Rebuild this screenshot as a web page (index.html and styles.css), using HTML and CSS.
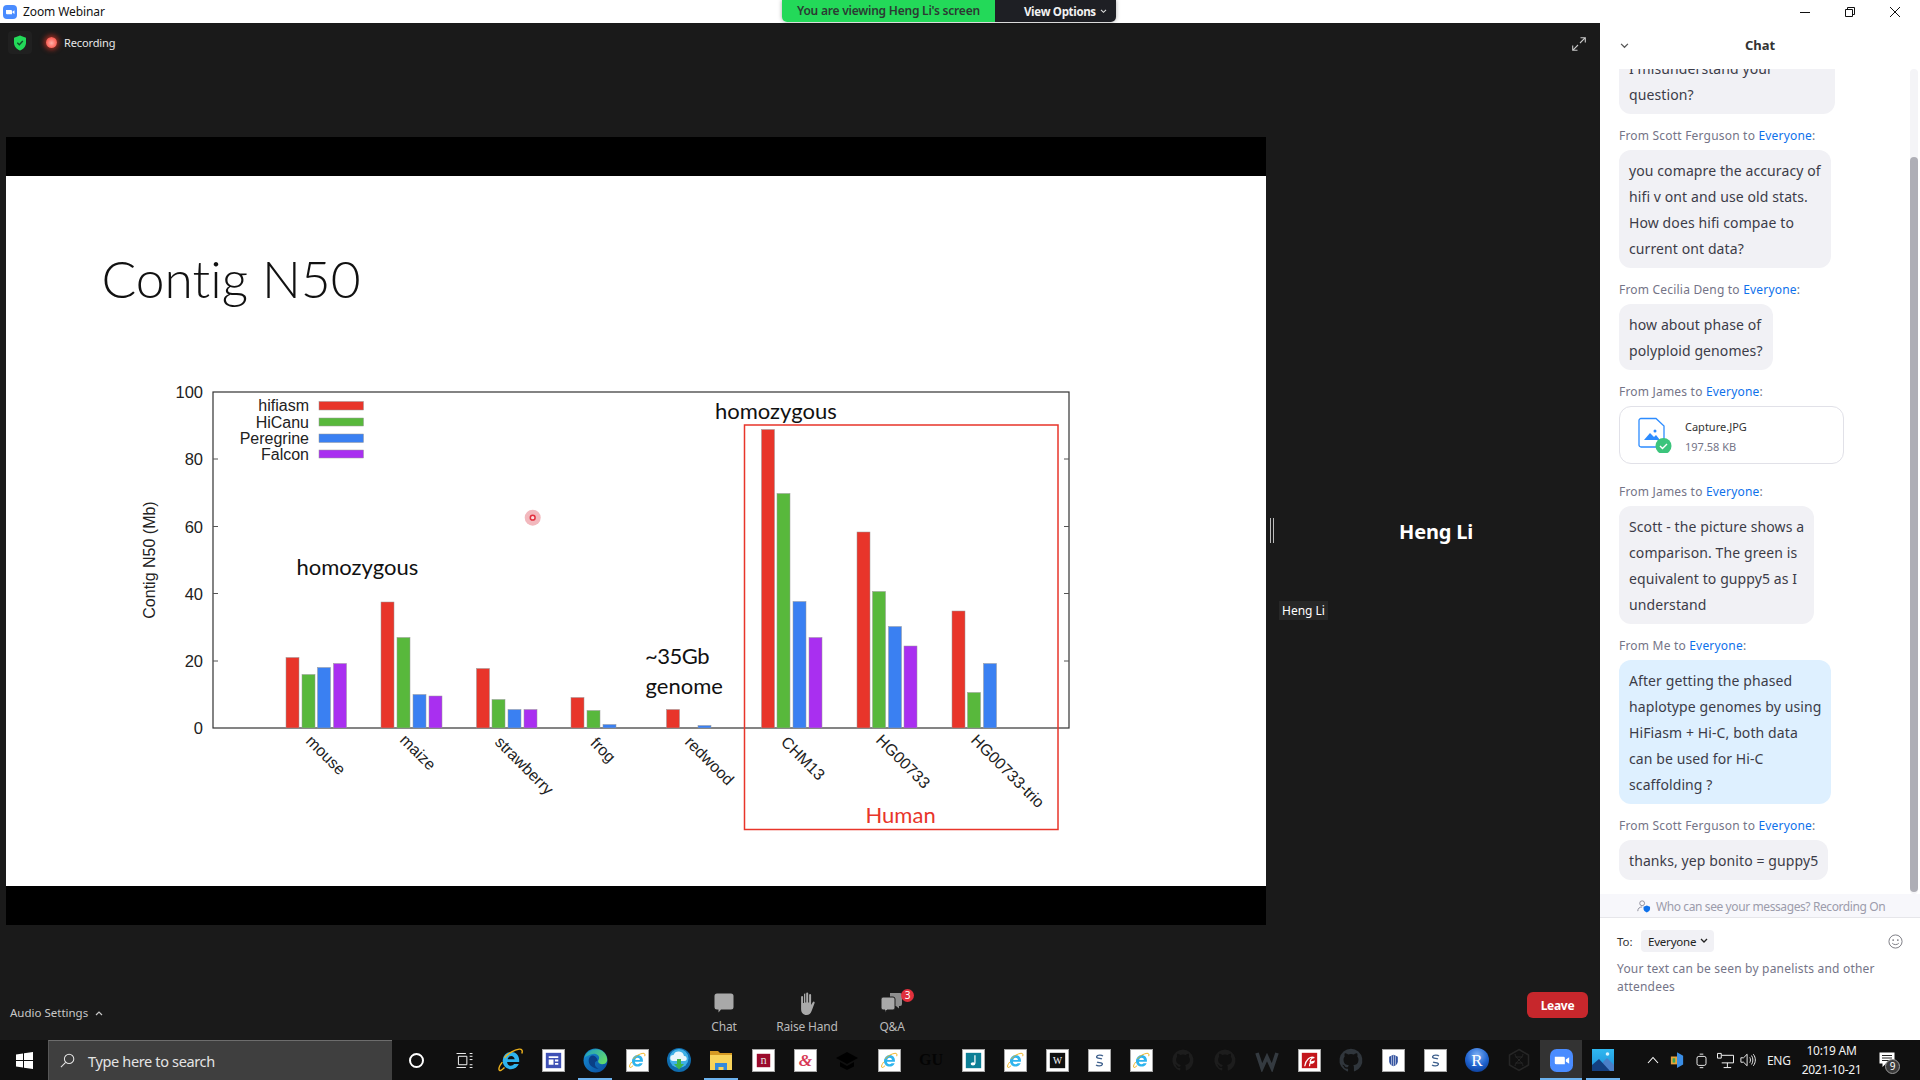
FILE: index.html
```html
<!DOCTYPE html>
<html lang="en">
<head>
<meta charset="utf-8">
<title>Zoom Webinar</title>
<link rel="stylesheet" href="styles.css">
</head>
<body>
<svg class="defs" width="0" height="0" aria-hidden="true">
  <symbol id="ie" viewBox="0 0 24 24">
    <path d="M12.200 4.500a8 8 0 0 0-7.900 8.300c.1 4.500 3.500 7.700 7.700 7.700 3.400 0 6-1.800 7.200-4.700h-4.400c-.7 1-1.700 1.500-2.900 1.500-1.900 0-3.400-1.300-3.500-3.400h11.100c.1-.5.1-1 .1-1.500 0-4.700-3.200-7.900-7.400-7.900zm-3.300 6.800c.3-1.800 1.600-3 3.300-3s3 1.200 3.200 3z" fill="#2fb4ee"/>
    <path d="M6 10C9 6 15 2.500 19.500 2c2.500-.3 3.500 1.200 2.500 4M6 19C3.500 21.500 1.500 22.500 1 21c-.5-1.500 1-4.500 3-7" fill="none" stroke="#eeb21c" stroke-width="1.300"/>
  </symbol>
  <symbol id="tile" viewBox="0 0 24 24">
    <rect x=".5" y=".5" width="23" height="23" fill="#fff" stroke="#a8a8a8"/>
  </symbol>
  <symbol id="slink" viewBox="0 0 24 24">
    <use href="#tile" width="24" height="24"/>
    <path d="M15.500 7.500c-1-1.500-6-1.500-6.500.5s4 1.500 5.500 2.500" fill="none" stroke="#3d5f8c" stroke-width="1.400"/>
    <path d="M8.500 16.500c1 1.500 6 1.500 6.500-.5s-4-1.500-5.500-2.500" fill="none" stroke="#3d5f8c" stroke-width="1.400"/>
  </symbol>
  <symbol id="iet" viewBox="0 0 24 24">
    <use href="#tile" width="24" height="24"/>
    <use href="#ie" x="3" y="3" width="18" height="18"/>
  </symbol>
  <symbol id="gh" viewBox="0 0 24 24">
    <path d="M12 1.500a10.800 10.800 0 0 0-3.400 21c.5.1.7-.2.7-.5v-2c-3 .6-3.600-1.300-3.600-1.300-.5-1.200-1.200-1.600-1.200-1.600-1-.7 0-.7 0-.7 1.100.1 1.700 1.100 1.700 1.100 1 1.700 2.500 1.200 3.100.9.1-.7.4-1.200.7-1.500-2.400-.3-4.900-1.200-4.900-5.300 0-1.200.4-2.100 1.100-2.900-.1-.3-.5-1.400.1-2.900 0 0 .9-.3 3 1.100a10 10 0 0 1 5.400 0c2-1.400 3-1.100 3-1.100.6 1.500.2 2.600.1 2.900.7.8 1.100 1.700 1.100 2.900 0 4.100-2.500 5-4.900 5.300.4.300.7 1 .7 2v3c0 .3.200.6.800.5A10.800 10.800 0 0 0 12 1.500z" fill="currentColor"/>
  </symbol>
</svg>

<header class="titlebar">
  <svg class="app-logo" viewBox="0 0 14 14" width="14" height="14"><rect width="14" height="14" rx="4" fill="#4a8cff"/><path d="M3 5h5a1 1 0 0 1 1 1v3.200H4a1 1 0 0 1-1-1zM9.500 6.500l2-1.300v3.800l-2-1.300z" fill="#fff"/></svg>
  <span class="app-title">Zoom Webinar</span>
  <div class="banner">
    <div class="banner-green">You are viewing Heng Li's screen</div>
    <div class="banner-dark">View Options <svg viewBox="0 0 8 6" width="7" height="5"><path d="M1 1l3 3 3-3" fill="none" stroke="#ddd" stroke-width="1.300"/></svg></div>
  </div>
  <div class="winbtns">
    <svg viewBox="0 0 10 10" width="10" height="10"><path d="M0 5.500h10" stroke="#111" fill="none"/></svg>
    <svg viewBox="0 0 10 10" width="10" height="10"><path d="M.5 2.500h7v7h-7zM2.500 2.500v-2h7v7h-2" stroke="#111" fill="none"/></svg>
    <svg viewBox="0 0 10 10" width="10" height="10"><path d="M0 0l10 10M10 0L0 10" stroke="#111" fill="none"/></svg>
  </div>
</header>

<div class="app">
  <main class="stage">
    <div class="stage-top">
      <div class="shield">
        <svg viewBox="0 0 14 16" width="14" height="16"><path d="M7 .5l6 2.200v5c0 3.800-2.700 6.300-6 7.800-3.300-1.500-6-4-6-7.800v-5z" fill="#23d959"/><path d="M4.300 7.800l2 2 3.500-3.800" fill="none" stroke="#124d2a" stroke-width="1.400"/></svg>
      </div>
      <span class="rec-dot"></span>
      <span class="rec-label">Recording</span>
      <svg class="expand" viewBox="0 0 14 14" width="14" height="14"><path d="M8.500.7h4.800v4.800M13.300.7L8 6M5.500 13.300H.7V8.500M.7 13.300L6 8" fill="none" stroke="#c9c9c9" stroke-width="1.100"/></svg>
    </div>
    <div class="stage-mid">
      <section class="share">
        <div class="slide">
          <svg class="chart" viewBox="0 0 1260 710" width="1260" height="710">
            <g transform="translate(-6 -176)">
              <text class="slide-title" x="101.500" y="298">Contig N50</text>

              <rect class="axis" x="213" y="392" width="856" height="336"/>
              <path class="tick" d="M213 459h5M213 526.500h5M213 593.500h5M213 661h5M1069 459h-5M1069 526.500h-5M1069 593.500h-5M1069 661h-5"/>
              <g class="num">
                <text x="203" y="398">100</text><text x="203" y="465">80</text><text x="203" y="532.500">60</text>
                <text x="203" y="599.500">40</text><text x="203" y="667">20</text><text x="203" y="734">0</text>
              </g>
              <text class="ylabel" transform="translate(155 560) rotate(-90)">Contig N50 (Mb)</text>

              <g class="num legend">
                <text x="309" y="411">hifiasm</text><text x="309" y="427.500">HiCanu</text>
                <text x="309" y="443.500">Peregrine</text><text x="309" y="459.500">Falcon</text>
              </g>
              <rect class="b-r" x="319" y="401.500" width="44.500" height="8.500"/>
              <rect class="b-g" x="319" y="418" width="44.500" height="8"/>
              <rect class="b-b" x="319" y="434" width="44.500" height="8.500"/>
              <rect class="b-p" x="319" y="450" width="44.500" height="8"/>

              <rect class="b-r" x="286" y="657.500" width="13" height="70.500"/>
              <rect class="b-g" x="302" y="674.500" width="13" height="53.500"/>
              <rect class="b-b" x="317.500" y="667.500" width="13" height="60.500"/>
              <rect class="b-p" x="333.500" y="663.500" width="13" height="64.500"/>

              <rect class="b-r" x="381" y="602" width="13" height="126"/>
              <rect class="b-g" x="397" y="637.500" width="13" height="90.500"/>
              <rect class="b-b" x="413" y="694.500" width="13" height="33.500"/>
              <rect class="b-p" x="429" y="696" width="13" height="32"/>

              <rect class="b-r" x="476.500" y="668.500" width="13" height="59.500"/>
              <rect class="b-g" x="492" y="699.500" width="13" height="28.500"/>
              <rect class="b-b" x="508" y="709.500" width="13" height="18.500"/>
              <rect class="b-p" x="524" y="709.500" width="13" height="18.500"/>

              <rect class="b-r" x="571" y="697.500" width="13" height="30.500"/>
              <rect class="b-g" x="587" y="710.500" width="13" height="17.500"/>
              <rect class="b-b" x="603" y="724.500" width="13" height="3.500"/>

              <rect class="b-r" x="666.500" y="709.500" width="13" height="18.500"/>
              <rect class="b-b" x="698" y="725.500" width="13" height="2.500"/>

              <rect class="b-r" x="761.500" y="429.500" width="13" height="298.500"/>
              <rect class="b-g" x="777" y="493.500" width="13" height="234.500"/>
              <rect class="b-b" x="793" y="601.500" width="13" height="126.500"/>
              <rect class="b-p" x="809" y="637.500" width="13" height="90.500"/>

              <rect class="b-r" x="857" y="532" width="13" height="196"/>
              <rect class="b-g" x="872.500" y="591.500" width="13" height="136.500"/>
              <rect class="b-b" x="888.500" y="626.500" width="13" height="101.500"/>
              <rect class="b-p" x="904" y="646" width="13" height="82"/>

              <rect class="b-r" x="952" y="611" width="13" height="117"/>
              <rect class="b-g" x="967.500" y="692.500" width="13" height="35.500"/>
              <rect class="b-b" x="983.500" y="663.500" width="13" height="64.500"/>

              <g class="xlabels">
                <text transform="translate(305 742) rotate(45)">mouse</text>
                <text transform="translate(399 741) rotate(45)">maize</text>
                <text transform="translate(494 743) rotate(45)">strawberry</text>
                <text transform="translate(589.500 744) rotate(45)">frog</text>
                <text transform="translate(684 743) rotate(45)">redwood</text>
                <text transform="translate(780 743) rotate(45)">CHM13</text>
                <text transform="translate(875 741) rotate(45)">HG00733</text>
                <text transform="translate(970 741) rotate(45)">HG00733-trio</text>
              </g>

              <text class="note" x="296.500" y="575">homozygous</text>
              <text class="note" x="715" y="419">homozygous</text>
              <text class="note note-tight" x="645" y="664">~35Gb</text>
              <text class="note" x="645.500" y="694">genome</text>

              <rect class="human-box" x="744.500" y="425" width="313.500" height="404.500"/>
              <text class="human" x="865.500" y="823">Human</text>

              <circle cx="532.700" cy="517.700" r="8" fill="#f2b8bd"/>
              <circle cx="532.700" cy="517.700" r="2.400" fill="#fbdcdc" stroke="#e2303f" stroke-width="1.500"/>
            </g>
          </svg>
        </div>
      </section>
      <div class="divider"></div>
      <aside class="speaker">
        <div class="speaker-name">Heng Li</div>
        <div class="speaker-tag">Heng Li</div>
      </aside>
    </div>
    <footer class="toolbar">
      <div class="audio">Audio Settings <svg viewBox="0 0 8 6" width="8" height="6"><path d="M1 5l3-3 3 3" fill="none" stroke="#c8c8c8" stroke-width="1.200"/></svg></div>
      <div class="tools">
        <div class="tool tool-chat">
          <svg viewBox="0 0 22 24" width="22" height="24"><path d="M4 1.500h14a2.500 2.500 0 0 1 2.500 2.500v11a2.500 2.500 0 0 1-2.500 2.500H8l-2.500 3V17.500H4A2.500 2.500 0 0 1 1.500 15V4A2.500 2.500 0 0 1 4 1.500z" fill="#a9a9a9"/></svg>
          <span>Chat</span>
        </div>
        <div class="tool tool-hand">
          <svg viewBox="0 0 22 24" width="22" height="24"><path d="M9.300 2.500v8h.9V1.500a1 1 0 0 1 2 0v9h.9V3a1 1 0 0 1 2 0v10l1.800-3a1 1 0 0 1 1.700 1l-3 8c-1 2.500-2.500 4-5 4-3.500 0-5.500-2.500-5.500-6V5a1 1 0 0 1 2 0v6h.9V2.500a1 1 0 0 1 1.300-1z" fill="#a9a9a9"/></svg>
          <span>Raise Hand</span>
        </div>
        <div class="tool tool-qa">
          <svg viewBox="0 0 24 24" width="24" height="24"><path d="M10 1h10a2 2 0 0 1 2 2v9a2 2 0 0 1-2 2h-1v2.500L16 14h-6z" fill="#8e8e8e"/><path d="M3 5h10a2 2 0 0 1 2 2v9a2 2 0 0 1-2 2H7l-2 3v-3H3a2 2 0 0 1-2-2V7a2 2 0 0 1 2-2z" fill="#a9a9a9" stroke="#1a1a1a"/></svg>
          <span>Q&amp;A</span>
          <b class="badge">3</b>
        </div>
      </div>
      <button class="leave" type="button">Leave</button>
    </footer>
  </main>

  <aside class="chat">
    <div class="chat-head">
      <svg class="chat-chev" viewBox="0 0 10 7" width="9" height="6"><path d="M1 1l4 4 4-4" fill="none" stroke="#555" stroke-width="1.400"/></svg>
      <span>Chat</span>
    </div>
    <div class="chat-scroll">
      <div class="chat-list">
        <div class="bubble bubble-first">I misunderstand your<br>question?</div>

        <div class="from">From Scott Ferguson to <a>Everyone</a>:</div>
        <div class="bubble">you comapre the accuracy of<br>hifi v ont and use old stats.<br>How does hifi compae to<br>current ont data?</div>

        <div class="from">From Cecilia Deng to <a>Everyone</a>:</div>
        <div class="bubble">how about phase of<br>polyploid genomes?</div>

        <div class="from">From James to <a>Everyone</a>:</div>
        <div class="file">
          <svg viewBox="0 0 36 36" width="36" height="36"><path d="M4 1.500h15L27 9v19a2 2 0 0 1-2 2H4a2 2 0 0 1-2-2V3.500a2 2 0 0 1 2-2z" fill="#fff" stroke="#2d8cff" stroke-width="1.300"/><path d="M7 23l6-7 4 4 2-2 4 5z" fill="#2d8cff"/><circle cx="18" cy="14" r="1.500" fill="#2d8cff"/><circle cx="26.500" cy="29" r="8" fill="#3cc47c"/><path d="M23 29l2.500 2.500 4.500-4.500" fill="none" stroke="#fff" stroke-width="1.400"/></svg>
          <div class="file-meta"><div class="file-name">Capture.JPG</div><div class="file-size">197.58 KB</div></div>
        </div>

        <div class="from from-after-file">From James to <a>Everyone</a>:</div>
        <div class="bubble">Scott - the picture shows a<br>comparison. The green is<br>equivalent to guppy5 as I<br>understand</div>

        <div class="from">From Me to <a>Everyone</a>:</div>
        <div class="bubble bubble-me">After getting the phased<br>haplotype genomes by using<br>HiFiasm + Hi-C, both data<br>can be used for Hi-C<br>scaffolding ?</div>

        <div class="from">From Scott Ferguson to <a>Everyone</a>:</div>
        <div class="bubble">thanks, yep bonito = guppy5</div>
      </div>
      <div class="scrolltrack"><div class="scrollthumb"></div></div>
    </div>
    <div class="notice">
      <svg viewBox="0 0 15 14" width="14" height="13"><circle cx="5.500" cy="3.500" r="2.600" fill="none" stroke="#8a8a98"/><path d="M.8 12c0-3 2-4.500 4.700-4.500" fill="none" stroke="#8a8a98"/><path d="M10.500 6l3.500 1.200v2.300c0 2-1.500 3.200-3.500 4-2-.8-3.500-2-3.500-4V7.200z" fill="#0e71eb"/></svg>
      <span>Who can see your messages? Recording On</span>
    </div>
    <div class="compose">
      <div class="to-row">
        <span class="to">To:</span>
        <span class="to-pick">Everyone <svg viewBox="0 0 8 6" width="8" height="6"><path d="M1 1l3 3 3-3" fill="none" stroke="#222" stroke-width="1.300"/></svg></span>
        <svg class="emoji" viewBox="0 0 16 16" width="15" height="15"><circle cx="8" cy="8" r="7" fill="none" stroke="#77777f"/><circle cx="5.500" cy="6.500" r=".9" fill="#77777f"/><circle cx="10.500" cy="6.500" r=".9" fill="#77777f"/><path d="M4.500 9.800c1.500 2 5.500 2 7 0" fill="none" stroke="#77777f"/></svg>
      </div>
      <div class="placeholder">Your text can be seen by panelists and other attendees</div>
    </div>
  </aside>
</div>

<nav class="taskbar">
  <div class="start"><svg viewBox="0 0 17 17" width="17" height="17"><path d="M0 2.400l7-1v6.700H0zM8 1.300L17 0v8.100H8zM0 9h7v6.600l-7-1zM8 9h9v8l-9-1.300z" fill="#fff"/></svg></div>
  <div class="search">
    <svg viewBox="0 0 16 16" width="15" height="15"><circle cx="9.700" cy="6.300" r="5" fill="none" stroke="#e6e6e6" stroke-width="1.100"/><path d="M6 10L1 15" stroke="#e6e6e6" stroke-width="1.100"/></svg>
    <span>Type here to search</span>
  </div>
  <div class="cell-wide"><span class="cortana"></span></div>
  <div class="cell-wide"><svg viewBox="0 0 18 16" width="17" height="15"><path d="M1 .5h10M1 15.500h10M3 3.500h9v9H3zM15 .5h3M15 3.500h3M15 7h3M15 12.500h3M15 15.500h3" fill="none" stroke="#fff" transform="translate(-.5 0)"/></svg></div>

  <div class="apps">
    <div class="app-i"><svg width="26" height="26"><use href="#ie" width="26" height="26"/></svg></div>
    <div class="app-i"><svg viewBox="0 0 24 24" width="23" height="23"><use href="#tile" width="24" height="24"/><rect x="4" y="4" width="16" height="16" fill="#3f51b5"/><path d="M7 7.500h10v2H7zM7 11h5v5.500H7zM13.500 11H17v2h-3.500zM13.500 14.500H17v2h-3.500z" fill="#fff"/></svg></div>
    <div class="app-i on"><svg viewBox="0 0 24 24" width="25" height="25"><defs><linearGradient id="edg" x1="0" y1="0" x2="1" y2="1"><stop offset="0" stop-color="#1690d6"/><stop offset="1" stop-color="#0a4a9c"/></linearGradient><linearGradient id="edg2" x1="0" y1="0" x2="1" y2=".6"><stop offset="0" stop-color="#1a9bc8"/><stop offset="1" stop-color="#5fd86f"/></linearGradient></defs><circle cx="12" cy="12" r="11.500" fill="url(#edg)"/><path d="M1.500 9C4 1 15-1.500 20.500 4.500c3.500 4 3.500 9.500 .5 10.500-2.500 1-6 .5-6.500-2 0-1.500 1-2.500 1-3.500 0-3-4-5-7.500-3.500C5.500 7 3 8 1.500 9z" fill="url(#edg2)"/><path d="M8 7.500c-3 1.500-3.500 6.500-.5 9.500 2 2 5 3 7.500 3-2.500-1-4-3-3.500-5.500.3-1.500 1.500-2 2.500-2.500-.5-3-3.500-5.500-6-4.500z" fill="#0a3f86"/></svg></div>
    <div class="app-i"><svg width="23" height="23"><use href="#iet" width="23" height="23"/></svg></div>
    <div class="app-i"><svg viewBox="0 0 24 24" width="24" height="24"><circle cx="12" cy="12" r="12" fill="#0f6cae"/><circle cx="12" cy="10.500" r="9.500" fill="#3fb0e6"/><path d="M6 13a3 3 0 0 1 .5-6 5.500 5.500 0 0 1 10.500 1 2.500 2.500 0 0 1 .5 5z" fill="#e9f6fb"/><path d="M10 11h4v5h3l-5 5.500L7 16h3z" fill="#3fb54a"/></svg></div>
    <div class="app-i on"><svg viewBox="0 0 24 24" width="24" height="24"><path d="M1 3h8l2 2h12v16H1z" fill="#d59a24"/><path d="M1 7h22v15H1z" fill="#f8d45c"/><path d="M6 15h12v7h-3.500v-3h-5v3H6z" fill="#3389dc"/></svg></div>
    <div class="app-i"><svg viewBox="0 0 24 24" width="23" height="23"><use href="#tile" width="24" height="24"/><rect x="5" y="5" width="14" height="14" fill="#9b0a2c"/><text class="tile-n" x="12" y="16">n</text></svg></div>
    <div class="app-i"><svg viewBox="0 0 24 24" width="23" height="23"><use href="#tile" width="24" height="24"/><text class="tile-amp" x="12" y="18">&amp;</text></svg></div>
    <div class="app-i"><svg viewBox="0 0 24 24" width="24" height="24"><path d="M12 4L1 10l11 6 11-6z" fill="#000"/><path d="M5 14v4.500l7 3.500 7-3.500V14l-7 4z" fill="#000"/></svg></div>
    <div class="app-i"><svg width="23" height="23"><use href="#iet" width="23" height="23"/></svg></div>
    <div class="app-i gu">GU</div>
    <div class="app-i"><svg viewBox="0 0 24 24" width="23" height="23"><use href="#tile" width="24" height="24"/><rect x="4" y="4" width="16" height="16" fill="#0d7f96"/><path d="M13.500 6.500v8.500" stroke="#fff" stroke-width="1.300" fill="none"/><ellipse cx="11.500" cy="15.500" rx="2.400" ry="1.800" fill="#fff"/></svg></div>
    <div class="app-i"><svg width="23" height="23"><use href="#iet" width="23" height="23"/></svg></div>
    <div class="app-i"><svg viewBox="0 0 24 24" width="23" height="23"><use href="#tile" width="24" height="24"/><rect x="4" y="4" width="16" height="16" fill="#111"/><text class="tile-w" x="12" y="15.500">W</text></svg></div>
    <div class="app-i"><svg width="23" height="23"><use href="#slink" width="23" height="23"/></svg></div>
    <div class="app-i"><svg width="23" height="23"><use href="#iet" width="23" height="23"/></svg></div>
    <div class="app-i gh-a"><svg width="24" height="24"><use href="#gh" width="24" height="24"/></svg></div>
    <div class="app-i gh-a"><svg width="24" height="24"><use href="#gh" width="24" height="24"/></svg></div>
    <div class="app-i"><svg viewBox="0 0 26 24" width="26" height="24"><path d="M3 5l5 15 5-11 5 11 5-15" fill="none" stroke="#343a40" stroke-width="3.600"/></svg></div>
    <div class="app-i"><svg viewBox="0 0 24 24" width="23" height="23"><use href="#tile" width="24" height="24"/><rect x="4" y="4" width="16" height="16" fill="#c4161c"/><path d="M7 18c1-7 6-11 10-9-3 0-5 3-4 5 1 2 4 0 4-2M12 18c0-3 2-5 5-5" fill="none" stroke="#fff" stroke-width="1.300"/></svg></div>
    <div class="app-i gh-b"><svg width="26" height="26"><use href="#gh" width="26" height="26"/></svg></div>
    <div class="app-i"><svg viewBox="0 0 24 24" width="23" height="23"><use href="#tile" width="24" height="24"/><path d="M12 6l4.500 2v5c0 2.500-2 4-4.500 5-2.500-1-4.500-2.500-4.500-5V8z" fill="#2f4f9e"/><path d="M10 7.500v9M12 6.500v11M14 7.500v9" stroke="#fff" stroke-width=".6"/></svg></div>
    <div class="app-i"><svg width="23" height="23"><use href="#slink" width="23" height="23"/></svg></div>
    <div class="app-i"><svg viewBox="0 0 24 24" width="24" height="24"><defs><radialGradient id="rb" cx=".5" cy=".3" r=".75"><stop offset="0" stop-color="#7fb2f5"/><stop offset=".6" stop-color="#1f63d0"/><stop offset="1" stop-color="#0b3c94"/></radialGradient></defs><circle cx="12" cy="12" r="12" fill="url(#rb)"/><text class="tile-r" x="12" y="18">R</text></svg></div>
    <div class="app-i"><svg viewBox="0 0 24 24" width="24" height="24"><path d="M12 1.500l9.500 5.500v10L12 22.500 2.500 17V7z" fill="none" stroke="#262626" stroke-width="1.500"/><path d="M8 6c0 4 8 8 8 12M16 6c0 4-8 8-8 12M8.500 9h7M8.500 15h7" fill="none" stroke="#262626"/></svg></div>
    <div class="app-i on active"><svg viewBox="0 0 24 24" width="23" height="23"><rect width="24" height="24" rx="7" fill="#4a8cff"/><path d="M5 8h9a1.500 1.500 0 0 1 1.500 1.500V16H6.500A1.500 1.500 0 0 1 5 14.500zM16.500 11l3.500-2.500v7L16.500 13z" fill="#fff"/></svg></div>
    <div class="app-i on"><svg viewBox="0 0 22 22" width="22" height="22"><defs><linearGradient id="ph" x1="0" y1="0" x2="0" y2="1"><stop offset="0" stop-color="#2fb8f0"/><stop offset="1" stop-color="#1e8fd8"/></linearGradient></defs><rect width="22" height="22" fill="url(#ph)"/><path d="M11 13l4-4 7 7v6H11z" fill="#4a7fc8"/><path d="M0 22v-6l7-6 11 12z" fill="#143f80"/><circle cx="15.500" cy="5" r="1.800" fill="#d8f3ff"/></svg></div>
  </div>

  <div class="tray">
    <svg class="t-chev" viewBox="0 0 12 8" width="12" height="8"><path d="M1 7l5-5.500L11 7" fill="none" stroke="#fff" stroke-width="1.100"/></svg>
    <svg class="t-col" viewBox="0 0 16 18" width="14" height="16"><path d="M8 0l7 4v10l-7 4z" fill="#3a8ee6"/><path d="M1 5h7v9H1z" fill="#e8a23a"/><path d="M3 7h3v5H3z" fill="#3aa655"/></svg>
    <svg class="t-phone" viewBox="0 0 12 20" width="11" height="18"><path d="M3 6h6a2 2 0 0 1 2 2v6a2 2 0 0 1-2 2H3a2 2 0 0 1-2-2V8a2 2 0 0 1 2-2zM4 3.500h4M4 18.500h4" fill="none" stroke="#fff"/></svg>
    <svg class="t-net" viewBox="0 0 18 18" width="17" height="17"><path d="M.5 1.500h4v5h-4zM5 3.500h12.500v8H5M11 11.500V16M7 16.500h8" fill="none" stroke="#fff"/></svg>
    <svg class="t-snd" viewBox="0 0 18 18" width="16" height="16"><path d="M1 6.500h3l4-4v13l-4-4H1zM11 6c1 2 1 4 0 6M13 4c2 3 2 7 0 10M15 2.500c3 4 3 9 0 13" fill="none" stroke="#fff"/></svg>
    <span class="eng">ENG</span>
    <div class="clock"><span>10:19 AM</span><span>2021-10-21</span></div>
    <div class="notif">
      <svg viewBox="0 0 16 16" width="16" height="16"><path d="M.5.500h15v11H7l-3.500 3.500V11.500h-3z" fill="#fff"/><path d="M3 3.500h10M3 6h10M3 8.500h7" stroke="#222"/></svg>
      <b>9</b>
    </div>
  </div>
</nav>
</body>
</html>
```
FILE: styles.css
```css
* { box-sizing: border-box; }
html, body { margin: 0; padding: 0; width: 1920px; height: 1080px; overflow: hidden; }
body { display: flex; flex-direction: column; background: #1a1a1a; font-family: "Open Sans", "Noto Sans", sans-serif; position: relative; }
.defs { position: absolute; }

/* Title bar */
.titlebar { height: 23px; flex: none; background: #fff; display: flex; align-items: center; padding-left: 3px; position: relative; }
.app-logo { flex: none; }
.app-title { margin-left: 6px; font-size: 12px; color: #111; font-family: "Noto Sans", sans-serif; letter-spacing: -.1px; }
.banner { position: absolute; top: 0; left: 782px; width: 334px; height: 22px; display: flex; border-radius: 0 0 5px 5px; overflow: hidden; box-shadow: 0 0 4px rgba(0,0,0,.35); }
.banner-green { width: 213px; background: #23d959; color: #2c3a33; font-size: 12px; font-weight: 600; line-height: 22px; padding-left: 15px; white-space: nowrap; font-family: "Noto Sans", sans-serif; letter-spacing: -.22px; }
.banner-dark { flex: 1; background: #1e1f24; color: #f2f2f2; font-size: 11.500px; font-weight: 700; line-height: 21px; padding-left: 29px; white-space: nowrap; letter-spacing: -.35px; display: flex; align-items: center; gap: 4px; }
.winbtns { margin-left: auto; display: flex; gap: 35px; padding-right: 20px; height: 18px; align-items: center; }

/* Layout */
.app { flex: 1; display: flex; min-height: 0; }
.stage { width: 1600px; flex: none; display: flex; flex-direction: column; background: #1a1a1a; }
.stage-top { height: 114px; flex: none; display: flex; align-items: flex-start; padding: 8px 0 0 8px; }
.shield { width: 24px; height: 23px; border-radius: 4px; background: #202020; display: flex; align-items: center; justify-content: center; }
.rec-dot { width: 11px; height: 11px; margin: 6px 0 0 14px; border-radius: 50%; background: radial-gradient(circle at 50% 55%, #ffb0a8 0, #ff6a60 55%, #e8453a 100%); box-shadow: 0 0 5px 2px rgba(200,50,35,.75); }
.rec-label { margin: 3px 0 0 7px; font-size: 11px; line-height: 17px; color: #e8e8e8; font-family: "Noto Sans", sans-serif; letter-spacing: -.12px; }
.expand { margin: 6px 14px 0 auto; }
.stage-mid { height: 788px; flex: none; display: flex; }
.share { width: 1260px; margin-left: 6px; height: 788px; padding-top: 39px; background: #000; flex: none; }
.slide { width: 1260px; height: 710px; background: #fff; overflow: hidden; }
.chart { display: block; }

/* Chart */
.slide-title { font-family: Lato, sans-serif; font-weight: 300; font-size: 51.500px; fill: #111; font-variant-ligatures: none; }
.axis { fill: none; stroke: #333; stroke-width: 1.200; }
.tick { fill: none; stroke: #555; }
.num text { font-family: "Liberation Sans", sans-serif; font-size: 16.500px; text-anchor: end; fill: #222; }
.legend text { font-size: 16px; }
.ylabel { font-family: "Liberation Sans", sans-serif; font-size: 16px; text-anchor: middle; fill: #222; }
.xlabels text { font-family: "Liberation Sans", sans-serif; font-size: 16px; fill: #222; }
.note { font-family: Lato, sans-serif; font-size: 22px; fill: #111; }
.note-tight { letter-spacing: -.5px; }
.human { font-family: Lato, sans-serif; font-size: 22px; fill: #e8352a; }
.human-box { fill: none; stroke: #e8352a; stroke-width: 1.500; }
.b-r { fill: #e8352a; stroke: #999; stroke-width: .5; }
.b-g { fill: #58b83c; stroke: #999; stroke-width: .5; }
.b-b { fill: #3a80f2; stroke: #999; stroke-width: .5; }
.b-p { fill: #a92ff0; stroke: #999; stroke-width: .5; }

/* Speaker side */
.divider { width: 4px; height: 25px; margin: 381px 0 0 4px; border-left: 1px solid #bbb; border-right: 1px solid #bbb; flex: none; }
.speaker { flex: 1; display: flex; flex-direction: column; padding-top: 381px; }
.speaker-name { align-self: center; margin-right: 2px; color: #fff; font-size: 20px; font-weight: 700; line-height: 28px; font-family: "Noto Sans", sans-serif; letter-spacing: -.2px; }
.speaker-tag { margin: 55px 0 0 5px; align-self: flex-start; height: 19px; padding: 0 3px; background: #272727; color: #fff; font-size: 12px; line-height: 19px; font-family: "Noto Sans", sans-serif; }

/* Toolbar */
.toolbar { flex: 1; display: flex; align-items: flex-start; position: relative; }
.audio { position: absolute; left: 10px; top: 80px; font-size: 11.500px; line-height: 16px; color: #c8c8c8; font-family: "Noto Sans", sans-serif; display: flex; align-items: center; gap: 7px; }
.tools { margin-left: 691px; padding-top: 67px; display: flex; }
.tool { display: flex; flex-direction: column; align-items: center; gap: 2px; color: #b9b9b9; font-size: 12px; font-family: "Noto Sans", sans-serif; letter-spacing: -.2px; position: relative; white-space: nowrap; }
.tool span { line-height: 16px; margin-top: 1px; }
.tool-chat { width: 66px; }
.tool-hand { width: 100px; }
.tool-qa { width: 70px; }
.badge { position: absolute; top: -3px; left: 44px; width: 13px; height: 13px; border-radius: 50%; background: #e0303c; color: #fff; font-size: 10px; line-height: 13px; text-align: center; font-weight: 400; }
.leave { position: absolute; left: 1527px; top: 67px; width: 61px; height: 26px; border: 0; padding: 0; border-radius: 6px; background: #c7272c; color: #fff; font-size: 12px; font-weight: 700; font-family: "Noto Sans", sans-serif; letter-spacing: -.3px; }

/* Chat */
.chat { flex: 1; background: #fff; display: flex; flex-direction: column; font-family: "Noto Sans", sans-serif; }
.chat-head { height: 46px; flex: none; display: flex; align-items: center; justify-content: center; position: relative; font-size: 13px; font-weight: 700; color: #333; padding-bottom: 2px; }
.chat-chev { position: absolute; left: 20px; top: 20px; }
.chat-scroll { height: 825px; flex: none; position: relative; overflow: hidden; display: flex; }
.chat-list { flex: 1; padding: 0 0 0 19px; display: flex; flex-direction: column; align-items: flex-start; margin-top: -21px; }
.bubble { background: #f1f1f5; border-radius: 12px; padding: 8px 10px 6px; font-size: 14px; line-height: 26px; color: #3c3c48; white-space: nowrap; letter-spacing: .1px; }
.bubble-first { width: 216px; }
.bubble-me { background: #def0ff; }
.from { margin: 14px 0 6px; font-size: 12px; line-height: 16px; color: #747487; letter-spacing: .2px; white-space: nowrap; }
.from-after-file { margin-top: 20px; }
.from a { color: #0e71eb; }
.file { width: 225px; height: 58px; flex: none; border: 1px solid #e1e1e8; border-radius: 12px; display: flex; padding: 10px 0 0 17px; }
.file svg { flex: none; }
.file-meta { margin-left: 12px; font-size: 11px; line-height: 20px; }
.file-name { color: #333; }
.file-size { color: #747487; }
.scrolltrack { position: absolute; right: 2px; top: 0; width: 8px; height: 825px; background: #f4f4f7; border-radius: 4px; }
.scrollthumb { margin-top: 88px; width: 8px; height: 735px; background: #aeaeb6; border-radius: 4px; }
.notice { height: 24px; flex: none; display: flex; align-items: center; padding: 1px 0 0 37px; gap: 5px; background: #f7f7fb; border-bottom: 1px solid #e6e6ea; font-size: 12px; color: #9c9cab; letter-spacing: -.4px; white-space: nowrap; }
.compose { flex: 1; padding: 12px 0 0 17px; }
.to-row { display: flex; align-items: center; height: 22px; }
.to { font-size: 11.500px; color: #333; width: 24px; }
.to-pick { width: 73px; height: 22px; border-radius: 4px; background: #f1f1f5; font-size: 11.500px; color: #222; display: flex; align-items: center; gap: 4px; padding-left: 7px; letter-spacing: -.2px; }
.emoji { margin-left: 174px; }
.placeholder { margin-top: 8px; width: 285px; font-size: 12px; line-height: 17.500px; color: #747487; letter-spacing: .2px; }

/* Taskbar */
.taskbar { height: 40px; flex: none; display: flex; background: #101010; color: #fff; }
.start { width: 48px; display: flex; align-items: center; justify-content: center; flex: none; }
.search { width: 344px; flex: none; background: #3f3f3f; border-top: 1px solid #6d6d6d; border-left: 1px solid #575757; display: flex; align-items: center; padding-left: 11px; gap: 13px; font-size: 14.500px; color: #e4e4e4; font-family: "Noto Sans", sans-serif; letter-spacing: -.35px; }
.cell-wide { width: 48px; flex: none; display: flex; align-items: center; justify-content: center; }
.cortana { width: 15px; height: 15px; border-radius: 50%; border: 2px solid #fff; }
.apps { margin-left: 2px; display: flex; flex: none; }
.app-i { width: 42px; height: 40px; flex: none; display: flex; align-items: center; justify-content: center; position: relative; }
.app-i.on::after { content: ""; position: absolute; left: 4px; right: 4px; bottom: 0; height: 2px; background: #6cb2ee; }
.app-i.active { background: #333; }
.app-i.active::after { left: 0; right: 0; }
.gu { font-family: "Liberation Serif", serif; font-size: 16px; font-weight: 700; color: #040404; }
.gh-a { color: #1d1d1d; }
.gh-b { color: #30363c; }
.tile-n { font-family: "Liberation Serif", serif; font-size: 13px; fill: #ddd; text-anchor: middle; }
.tile-w { font-family: "Liberation Serif", serif; font-size: 10px; fill: #fff; text-anchor: middle; }
.tile-r { font-family: "Liberation Serif", serif; font-size: 17px; fill: #fff; text-anchor: middle; }
.tile-amp { font-family: "Liberation Serif", serif; font-size: 18px; font-weight: 700; font-style: italic; fill: #d83a56; text-anchor: middle; }
.tray { flex: 1; display: flex; align-items: center; padding-left: 23px; font-family: "Noto Sans", sans-serif; }
.t-chev { flex: none; }
.t-col { margin-left: 11px; flex: none; }
.t-phone { margin-left: 11.500px; flex: none; }
.t-net { margin-left: 10px; flex: none; }
.t-snd { margin-left: 6.500px; flex: none; }
.eng { margin-left: 11px; width: 22px; font-size: 12px; color: #eee; letter-spacing: -.3px; white-space: nowrap; }
.clock { margin-left: 14px; flex: none; display: flex; flex-direction: column; align-items: center; font-size: 12px; line-height: 19px; color: #f2f2f2; letter-spacing: -.3px; width: 57px; white-space: nowrap; }
.notif { position: relative; margin-left: 19px; flex: none; }
.notif svg { display: block; }
.notif b { position: absolute; left: 6px; top: 7px; width: 15px; height: 15px; border-radius: 50%; background: #3a3a3a; border: 1px solid #999; color: #fff; font-size: 10px; line-height: 13px; text-align: center; font-weight: 400; }
```
